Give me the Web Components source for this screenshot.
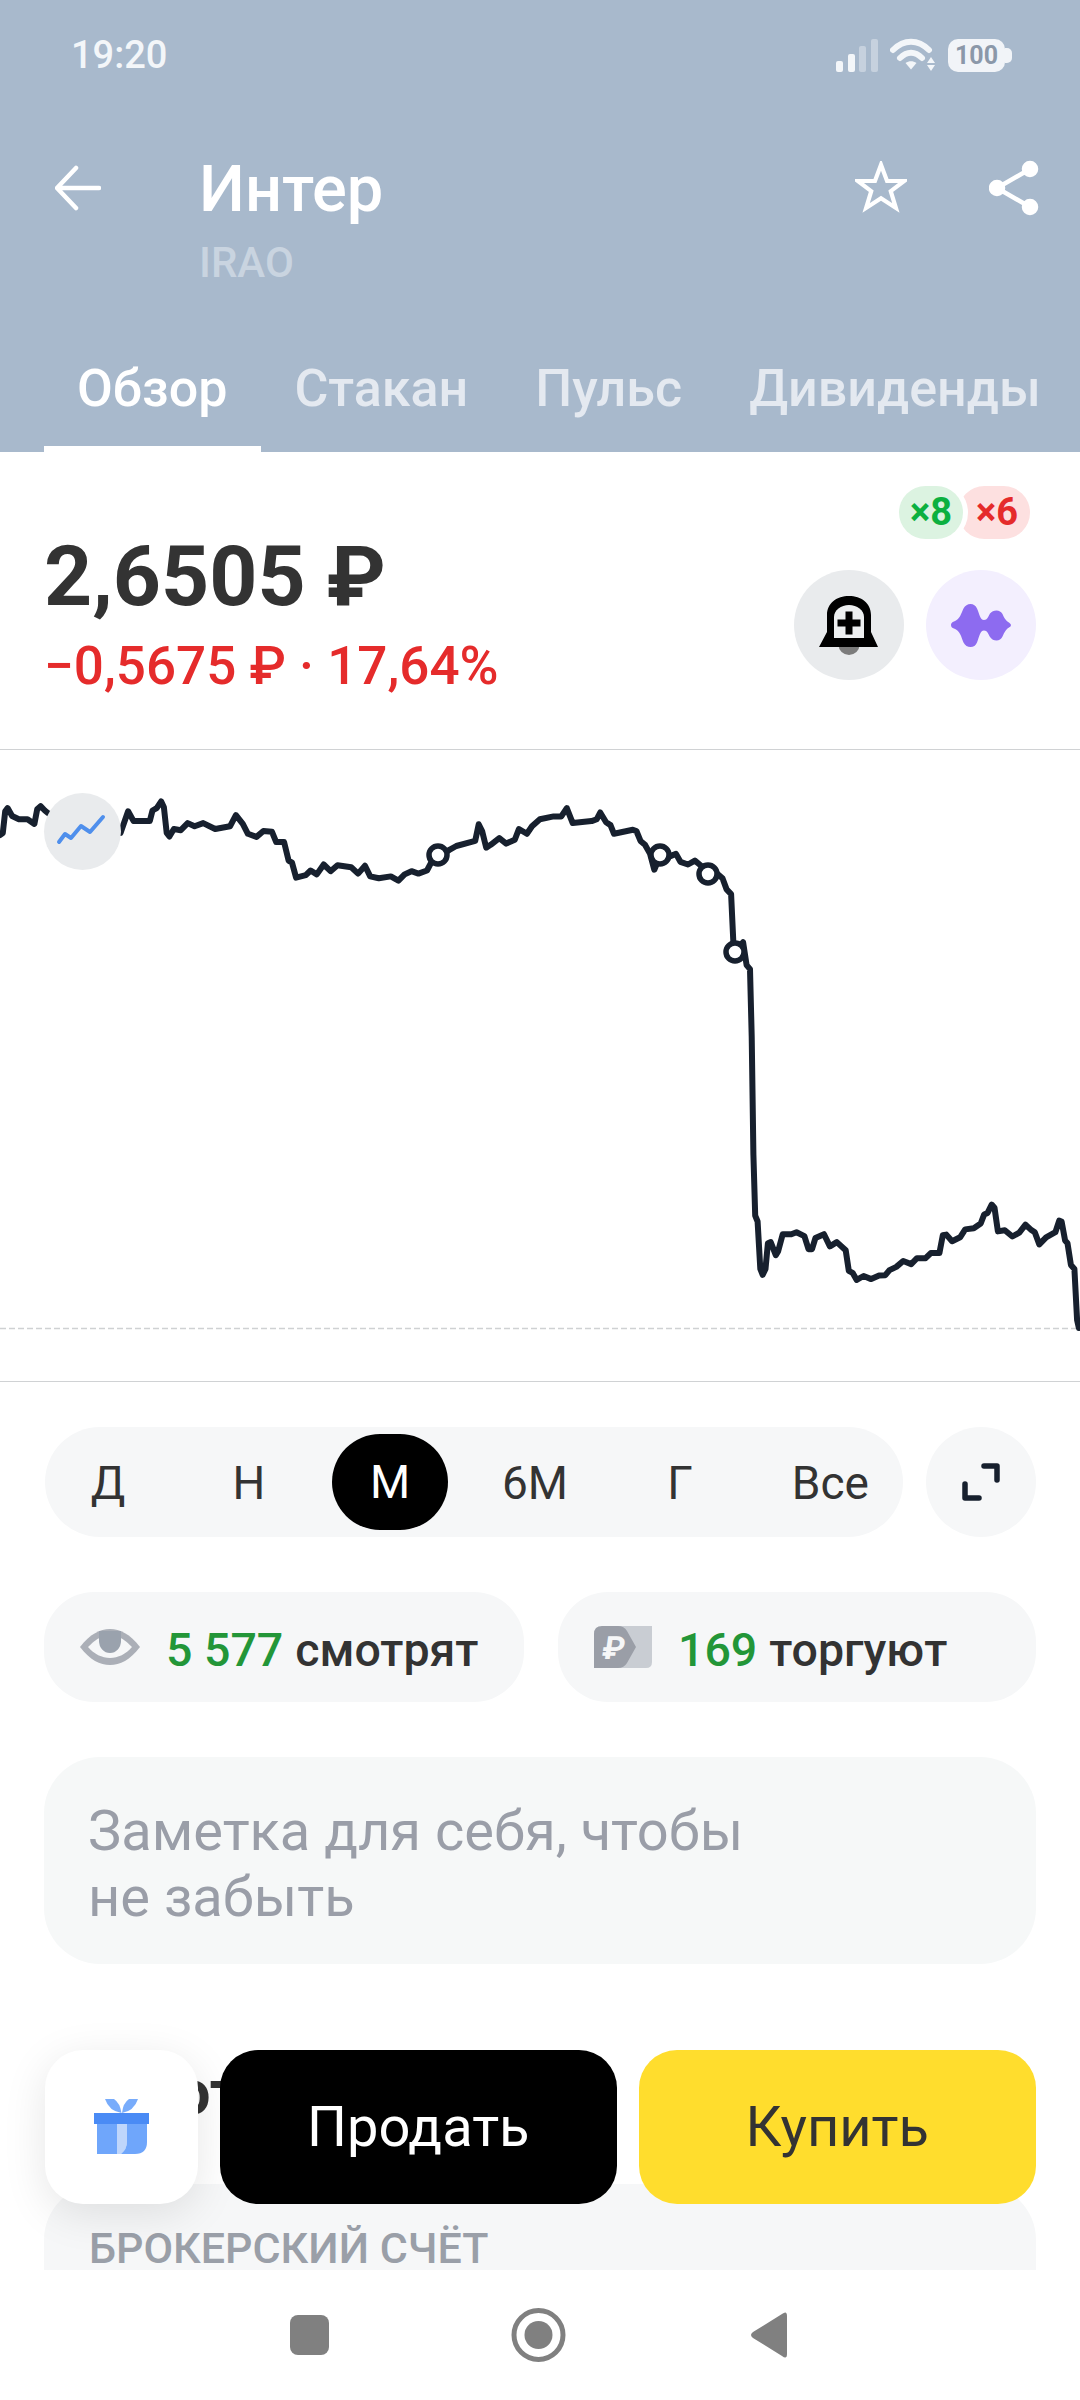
<!DOCTYPE html>
<html lang="ru">
<head>
<meta charset="utf-8">
<title>Интер</title>
<style>
  html, body { margin: 0; padding: 0; background: #fff; }
  body { font-family: Roboto, "Liberation Sans", sans-serif; }
</style>
</head>
<body>
<app-screen>
  <stock-header slot="top" name="Интер" ticker="IRAO"></stock-header>
  <price-block></price-block>
  <price-chart></price-chart>
  <range-picker></range-picker>
  <stat-row>
    <stat-pill count="5 577" label="смотрят" icon="eye"></stat-pill>
    <stat-pill count="169" label="торгуют" icon="rub"></stat-pill>
  </stat-row>
  <note-card>Заметка для себя, чтобы<br>не забыть</note-card>
  <account-peek title="Мой отчёт" caption="БРОКЕРСКИЙ СЧЁТ"></account-peek>
  <action-bar slot="over"></action-bar>
  <nav-bar slot="over"></nav-bar>
</app-screen>

<script>
// one small helper, every element below just hands it markup and styles
function mount(el, css, html) {
	el.attachShadow({ mode: 'open' }).innerHTML = `<style>${css}</style>${html}`;
}

class AppScreen extends HTMLElement {
	constructor() {
		super();
		mount(this, `
			:host { display: block; position: relative; width: 1080px; height: 2400px; overflow: hidden;
				background: #fff; color: #333; font-family: Roboto, "Liberation Sans", sans-serif; }
		`, `<slot name="top"></slot><slot></slot><slot name="over"></slot>`);
	}
}

class StatusBar extends HTMLElement {
	constructor() {
		super();
		mount(this, `
			:host { display: flex; align-items: center; justify-content: space-between; height: 110px; padding: 0 68px 0 71px; color: #f3f6f9; }
			.time { font-size: 38px; font-weight: 500; }
			.icons { display: flex; align-items: center; gap: 12px; height: 34px; }
			.batt { position: relative; width: 57px; height: 33px; border-radius: 10px; background: #f1f4f8; color: #8b98a9;
				font-size: 25px; font-weight: 700; line-height: 33px; text-align: center; margin-right: 7px; }
			.batt::after { content: ""; position: absolute; right: -7px; top: 9px; width: 7px; height: 15px; border-radius: 0 5px 5px 0; background: #f1f4f8; }
			svg { display: block; }
		`, `
			<span class="time">19:20</span>
			<div class="icons">
				<svg width="42" height="33" viewBox="0 0 42 33" fill="#f3f6f9">
					<rect x="0" y="22" width="7" height="11" rx="2"/>
					<rect x="12" y="15" width="7" height="18" rx="2"/>
					<rect x="23" y="7" width="7" height="26" rx="2" opacity=".4"/>
					<rect x="35" y="0" width="7" height="33" rx="2" opacity=".4"/>
				</svg>
				<svg width="46" height="34" viewBox="0 0 46 34" fill="none" stroke="#f3f6f9" stroke-width="6" stroke-linecap="round">
					<path d="M3 12C14 1 28 1 39 12"/>
					<path d="M10 20C17 13 25 13 32 20"/>
					<path d="M15.500 25L21 31.500L26.500 25C23 22.500 19 22.500 15.500 25Z" fill="#f3f6f9" stroke="none"/>
					<path d="M41 19l4 6h-8zM41 33l4-6h-8z" fill="#f3f6f9" stroke="none"/>
				</svg>
				<div class="batt">100</div>
			</div>
		`);
	}
}

class StockHeader extends HTMLElement {
	constructor() {
		super();
		const name = this.getAttribute('name');
		const ticker = this.getAttribute('ticker');
		mount(this, `
			:host { display: block; height: 452px; background: #a8b9cc; color: #fff; }
			.row { display: flex; align-items: flex-start; padding: 43px 39px 0 55px; height: 250px; box-sizing: border-box; }
			.back { flex: none; margin: 12px 98px 0 0; }
			.title { flex: 1; }
			.name { font-size: 65px; font-weight: 500; line-height: 72px; }
			.ticker { font-size: 42px; font-weight: 500; line-height: 48px; margin-top: 14px; color: #c9d4e0; }
			.star { margin: 8px 82px 0 0; flex: none; }
			.share { margin-top: 7px; flex: none; }
			svg { display: block; }
		`, `
			<status-bar></status-bar>
			<div class="row">
				<svg class="back" width="46" height="46" viewBox="0 0 46 46" fill="none" stroke="#fff" stroke-width="4.500" stroke-linecap="round" stroke-linejoin="round">
					<path d="M44 23H3M21 3L2 23L21 43"/>
				</svg>
				<div class="title">
					<div class="name">${name}</div>
					<div class="ticker">${ticker}</div>
				</div>
				<svg class="star" width="52" height="52" viewBox="0 0 56 56" fill="none" stroke="#fff" stroke-width="4.500">
					<path d="M28 4L34.500 21.500H53L38.500 32.500L44 50.500L28 40L12 50.500L17.500 32.500L3 21.500H21.500Z"/>
				</svg>
				<svg class="share" width="52" height="56" viewBox="0 0 52 56" fill="#fff" stroke="#fff" stroke-width="4.500">
					<path d="M41 9L8 28L41 47" fill="none"/>
					<circle cx="41" cy="9" r="6"/><circle cx="8" cy="28" r="6"/><circle cx="41" cy="47" r="6"/>
				</svg>
			</div>
			<tab-bar></tab-bar>
		`);
	}
}

class TabBar extends HTMLElement {
	constructor() {
		super();
		mount(this, `
			:host { display: flex; gap: 67px; height: 92px; padding-left: 77px; font-size: 52px; font-weight: 500; line-height: 58px; white-space: nowrap; color: #e4e9f0; }
			span { position: relative; height: 92px; }
			.on { color: #fff; }
			.on::after { content: ""; position: absolute; left: -33px; right: -34px; bottom: 0; height: 6px; background: #fff; }
		`, `
			<span class="on">Обзор</span>
			<span>Стакан</span>
			<span>Пульс</span>
			<span>Дивиденды</span>
		`);
	}
}

class PriceBlock extends HTMLElement {
	constructor() {
		super();
		mount(this, `
			:host { display: flex; justify-content: space-between; height: 298px; box-sizing: border-box; padding: 0 44px; border-bottom: 1px solid #d0d2d4; }
			.left { padding-top: 79px; }
			.price { font-size: 84px; font-weight: 700; line-height: 92px; color: #333; }
			.delta { font-size: 53px; font-weight: 500; line-height: 58px; margin-top: 14px; color: #e52b2b; }
			.right { display: flex; flex-direction: column; align-items: flex-end; padding-top: 34px; }
			.pills { display: flex; margin-right: 6px; }
			.pill { height: 53px; border-radius: 27px; font-size: 38px; font-weight: 700; line-height: 53px; text-align: center; box-sizing: border-box; }
			.up { position: relative; z-index: 1; width: 64px; background: #dcf3e1; color: #0cb040; box-shadow: 0 0 0 5px #fff; }
			.down { background: #fde0e0; color: #e52b2b; margin-left: -5px; width: 72px; padding-left: 6px; }
			.btns { display: flex; gap: 22px; margin-top: 31px; }
			.btn { width: 110px; height: 110px; border-radius: 50%; }
			.bell { background: #e9ebed; }
			.ai { background: #f3effe; }
			svg { display: block; }
		`, `
			<div class="left">
				<div class="price">2,6505 ₽</div>
				<div class="delta">−0,5675 ₽ · 17,64%</div>
			</div>
			<div class="right">
				<div class="pills"><div class="pill up">×8</div><div class="pill down">×6</div></div>
				<div class="btns">
					<div class="btn bell">
						<svg width="110" height="110" viewBox="0 0 110 110">
							<ellipse cx="55" cy="75" rx="10.500" ry="10" fill="#7c7c7c"/>
							<path d="M25 77L33 62V45C33 33 43 26 55 26C67 26 77 33 77 45V62L84 77Z" fill="#000"/>
							<path d="M40 68V47C40 40 47 35 55 35C63 35 70 40 70 47V68Z" fill="#edeff0"/>
							<path d="M51.500 41.500H58.500V49.500H66.500V56.500H58.500V64.500H51.500V56.500H43.500V49.500H51.500Z" fill="#000"/>
						</svg>
					</div>
					<div class="btn ai">
						<svg width="110" height="110" viewBox="0 0 110 110">
							<path d="M25 55Q25 52.500 28 51.500C34 49 35 44 37.500 38.500Q40 34 44.500 34Q49 34 51 38.500C53.500 44 54 50 58 50C61.500 50 62 47 64 43.500Q66.500 40.500 70.500 40.500Q74.500 40.500 76.500 44C78.500 49 80.500 51 83 52.500Q85 54 85 55Q85 56.500 83 57.500C80.500 59 78.500 61.500 76.500 66.500Q74.500 70.500 70.500 70.500Q66.500 70.500 64 67C62 63.500 61.500 60.500 58 60.500C54 60.500 53.500 66.500 51 72.500Q49 77 44.500 77Q40 77 37.500 72.500C35 66 34 61 28 58.500Q25 57.500 25 55Z" fill="#8d6bf0"/>
						</svg>
					</div>
				</div>
			</div>
		`);
	}
}

// points read off the reference, in crop coordinates (see sx/sy below)
const LEFT_PART = [[0,190],[8,185],[15,130],[22,122],[35,142],[55,150],[80,150],[100,162],[108,125],[118,117],[130,128],[140,135],[350,185],[360,160],[372,130],[388,155],[435,155],[443,128],[455,122],[468,105],[476,120],[484,185],[492,194],[505,175],[525,178],[545,160],[565,168],[590,160],[625,175],[668,168],[685,140],[705,162],[720,187],[745,195],[765,180],[790,182],[802,208],[825,208],[838,255],[848,260],[860,298],[888,292],[902,280],[920,290],[940,265],[960,282],[980,267],[1020,272],[1040,288],[1060,268],[1075,295],[1100,300],[1135,295],[1157,306],[1175,290],[1195,282],[1215,288],[1240,280],[1255,255],[1305,228],[1325,218],[1380,205],[1390,163],[1400,180],[1412,222],[1425,215],[1450,198],[1470,212],[1495,202],[1507,175],[1530,187],[1545,168],[1568,150]];
const RIGHT_PART = [[40,143],[62,143],[78,122],[95,160],[150,155],[165,150],[175,133],[192,158],[205,165],[215,187],[270,177],[280,180],[292,205],[305,215],[320,238],[332,278],[340,262],[350,240],[375,245],[395,238],[408,258],[430,265],[450,255],[468,268],[487,288],[510,285],[530,300],[542,328],[555,340],[562,470],[566,486],[590,462],[600,520],[610,530],[615,700],[620,1000],[625,1155],[632,1170],[640,1290],[647,1305],[655,1290],[662,1225],[670,1222],[685,1255],[692,1245],[705,1202],[730,1202],[745,1197],[768,1207],[780,1240],[790,1240],[800,1212],[825,1202],[842,1233],[862,1222],[888,1243],[897,1295],[908,1300],[920,1318],[940,1308],[962,1316],[985,1307],[1003,1306],[1015,1293],[1035,1285],[1055,1270],[1078,1278],[1095,1263],[1120,1263],[1135,1250],[1160,1250],[1170,1205],[1180,1203],[1197,1220],[1220,1210],[1235,1190],[1260,1187],[1280,1175],[1290,1152],[1300,1148],[1312,1127],[1320,1135],[1330,1195],[1350,1192],[1372,1208],[1392,1198],[1410,1178],[1425,1190],[1437,1197],[1450,1228],[1470,1210],[1497,1197],[1508,1168],[1515,1170],[1525,1218],[1532,1225],[1542,1280],[1552,1290],[1560,1420],[1565,1440]];

class PriceChart extends HTMLElement {
	constructor() {
		super();
		const sx = x => (x / 2.904).toFixed(1);
		const sy = y => (10 + y / 2.535).toFixed(1); // chart box starts 10px above the crop
		const left = LEFT_PART.map(p => `${sx(p[0])} ${sy(p[1])}`);
		const right = RIGHT_PART.map(p => `${sx(p[0] + 1568)} ${sy(p[1])}`);
		const line = 'M' + left.concat(right).join('L');
		const dots = [[438, 105], [660, 105], [708, 124], [735, 202]];
		mount(this, `
			:host { display: block; position: relative; height: 631px; border-bottom: 1px solid #d0d2d4; }
			svg { display: block; }
			.mark { position: absolute; left: 44px; top: 43px; width: 77px; height: 77px; border-radius: 50%; background: #e9ebed; }
		`, `
			<svg width="1080" height="631" viewBox="0 0 1080 631">
				<path d="M0 578.500H1080" stroke="#cfd1d3" stroke-width="1.500" stroke-dasharray="6 3"/>
				<path d="${line}" fill="none" stroke="#17202e" stroke-width="6" stroke-linejoin="round" stroke-linecap="round"/>
				${dots.map(d => `<circle cx="${d[0]}" cy="${d[1]}" r="9" fill="#fff" stroke="#17202e" stroke-width="5.500"/>`).join('')}
			</svg>
			<div class="mark">
				<svg width="77" height="77" viewBox="0 0 77 77" fill="none" stroke="#4f8fec" stroke-width="4" stroke-linecap="round" stroke-linejoin="round">
					<path d="M15 49L21 41L27 45L37 33L46 39L59 24"/>
				</svg>
			</div>
		`);
	}
}

class RangePicker extends HTMLElement {
	constructor() {
		super();
		mount(this, `
			:host { display: flex; gap: 23px; padding: 45px 44px 0 45px; }
			.seg { display: grid; grid-template-columns: 126px 156px 121px 174px 116px 165px; align-items: center;
				width: 858px; height: 110px; border-radius: 55px; background: #f6f7f8; font-size: 46px; color: #333; text-align: center; }
			.seg b { font-weight: 400; position: relative; top: 1px; }
			.seg .on { justify-self: end; top: 0; width: 116px; height: 96px; line-height: 96px; border-radius: 48px; background: #000; color: #fff; }
			.seg .last { text-align: right; padding-right: 34px; }
			.full { width: 110px; height: 110px; border-radius: 50%; background: #f6f7f8; }
			svg { display: block; }
		`, `
			<div class="seg">
				<b>Д</b><b>Н</b><b class="on">М</b><b>6М</b><b>Г</b><b class="last">Все</b>
			</div>
			<div class="full">
				<svg width="110" height="110" viewBox="0 0 110 110" fill="none" stroke="#17202e" stroke-width="5.500" stroke-linecap="round" stroke-linejoin="round">
					<path d="M58 39H71V53M39 57V71H53"/>
				</svg>
			</div>
		`);
	}
}

class StatRow extends HTMLElement {
	constructor() {
		super();
		mount(this, `
			:host { display: grid; grid-template-columns: 480px 478px; gap: 34px; margin: 55px 44px 0; }
		`, `<slot></slot>`);
	}
}

class StatPill extends HTMLElement {
	constructor() {
		super();
		const icons = {
			eye: `<svg width="60" height="36" viewBox="0 0 60 36">
				<path d="M0 18C10 5 20 0 30 0C40 0 50 5 60 18C50 31 40 36 30 36C20 36 10 31 0 18Z" fill="#abafb7"/>
				<path d="M8 18C14 12 18 9 22 8H38C42 9 46 12 52 18C46 25 38 29 30 29C22 29 14 25 8 18Z" fill="#f6f7f8"/>
				<path d="M19 2H41V12A11 12 0 0 1 19 12Z" fill="#9aa2ad"/>
			</svg>`,
			rub: `<svg width="58" height="42" viewBox="0 0 58 42">
				<path d="M20 0H58V36Q58 42 52 42H20Z" fill="#c9cdd3"/>
				<path d="M0 8Q0 0 8 0H24Q30 0 33 5L42 21L33 37Q30 42 24 42H0Z" fill="#9a9ea7"/>
				<text x="19" y="33" font-family="Roboto, sans-serif" font-size="32" font-weight="700" fill="#f6f7f8" text-anchor="middle" transform="skewX(-8) translate(4 0)">₽</text>
			</svg>`
		};
		mount(this, `
			:host { display: flex; align-items: center; height: 110px; border-radius: 50px; background: #f6f7f8; font-size: 46.500px; font-weight: 500; white-space: nowrap; color: #333; }
			.ic { flex: none; display: flex; margin: 0 26px 0 36px; }
			.n, .l { margin-top: 6px; }
			.n { color: #239638; margin-right: 12px; }
		`, `
			<span class="ic">${icons[this.getAttribute('icon')]}</span>
			<span class="n">${this.getAttribute('count')}</span>
			<span class="l">${this.getAttribute('label')}</span>
		`);
	}
}

class NoteCard extends HTMLElement {
	constructor() {
		super();
		mount(this, `
			:host { display: block; margin: 55px 44px 0; height: 207px; box-sizing: border-box; padding: 41px 44px 0; border-radius: 56px;
				background: #f6f8f8; color: #9a9ea8; font-size: 56px; line-height: 66px; }
		`, `<slot></slot>`);
	}
}

class AccountPeek extends HTMLElement {
	constructor() {
		super();
		mount(this, `
			:host { display: block; padding: 0 44px; }
			h2 { margin: 91px 0 0 4px; font-size: 63px; font-weight: 700; line-height: 76px; color: #333; word-spacing: -15px; white-space: nowrap; }
			.card { margin-top: 53px; height: 86px; border-radius: 56px 56px 0 0; background: #f6f7f8; padding: 43px 45px 0; box-sizing: border-box;
				color: #9a9fa8; font-size: 43px; font-weight: 500; line-height: 43px; white-space: nowrap; }
		`, `
			<h2>${this.getAttribute('title')}</h2>
			<div class="card">${this.getAttribute('caption')}</div>
		`);
	}
}

class ActionBar extends HTMLElement {
	constructor() {
		super();
		mount(this, `
			:host { position: absolute; left: 45px; right: 44px; top: 2050px; display: flex; gap: 22px; }
			.gift { width: 153px; height: 154px; flex: none; border-radius: 38px; background: #fff; box-shadow: 0 10px 44px rgba(0,0,0,.1); display: flex; align-items: center; justify-content: center; }
			.btn { height: 154px; border-radius: 38px; font-size: 56px; line-height: 154px; text-align: center; }
			.sell { background: #000; color: #fff; flex: 396; }
			.buy { background: #ffdd2d; color: #333; flex: 397; }
			svg { display: block; }
		`, `
			<div class="gift">
				<svg width="56" height="56" viewBox="0 0 56 56">
					<path d="M11 0H20Q26 4 27.500 14Q15 12 11 0Z" fill="#78acfb"/>
					<path d="M44 0H35Q29 4 28 14Q40 12 44 0Z" fill="#78acfb"/>
					<rect x="3" y="25" width="20" height="30" fill="#6fa6fb"/>
					<path d="M23 25H33V43Q33 50 27 55H23Z" fill="#bfd6fb"/>
					<path d="M33 25H53V43Q53 55 41 55H27Q33 50 33 43Z" fill="#6fa6fb"/>
					<rect x="0" y="14" width="55" height="11" fill="#4a8bf5"/>
				</svg>
			</div>
			<div class="btn sell">Продать</div>
			<div class="btn buy">Купить</div>
		`);
	}
}

class NavBar extends HTMLElement {
	constructor() {
		super();
		mount(this, `
			:host { position: absolute; left: 0; right: 0; top: 2270px; height: 130px; display: flex; justify-content: center; align-items: center; }
			svg { display: block; }
		`, `
			<svg width="1080" height="130" viewBox="0 2270 1080 130" fill="#808080">
				<rect x="290" y="2315" width="39" height="40" rx="8"/>
				<circle cx="538.500" cy="2335" r="24.500" fill="none" stroke="#808080" stroke-width="5"/>
				<circle cx="538.500" cy="2335" r="14"/>
				<path d="M787 2316V2354Q787 2360 782 2356L753 2338Q749 2335 753 2332L782 2314Q787 2310 787 2316Z"/>
			</svg>
		`);
	}
}

customElements.define('app-screen', AppScreen);
customElements.define('status-bar', StatusBar);
customElements.define('stock-header', StockHeader);
customElements.define('tab-bar', TabBar);
customElements.define('price-block', PriceBlock);
customElements.define('price-chart', PriceChart);
customElements.define('range-picker', RangePicker);
customElements.define('stat-row', StatRow);
customElements.define('stat-pill', StatPill);
customElements.define('note-card', NoteCard);
customElements.define('account-peek', AccountPeek);
customElements.define('action-bar', ActionBar);
customElements.define('nav-bar', NavBar);
</script>
</body>
</html>
